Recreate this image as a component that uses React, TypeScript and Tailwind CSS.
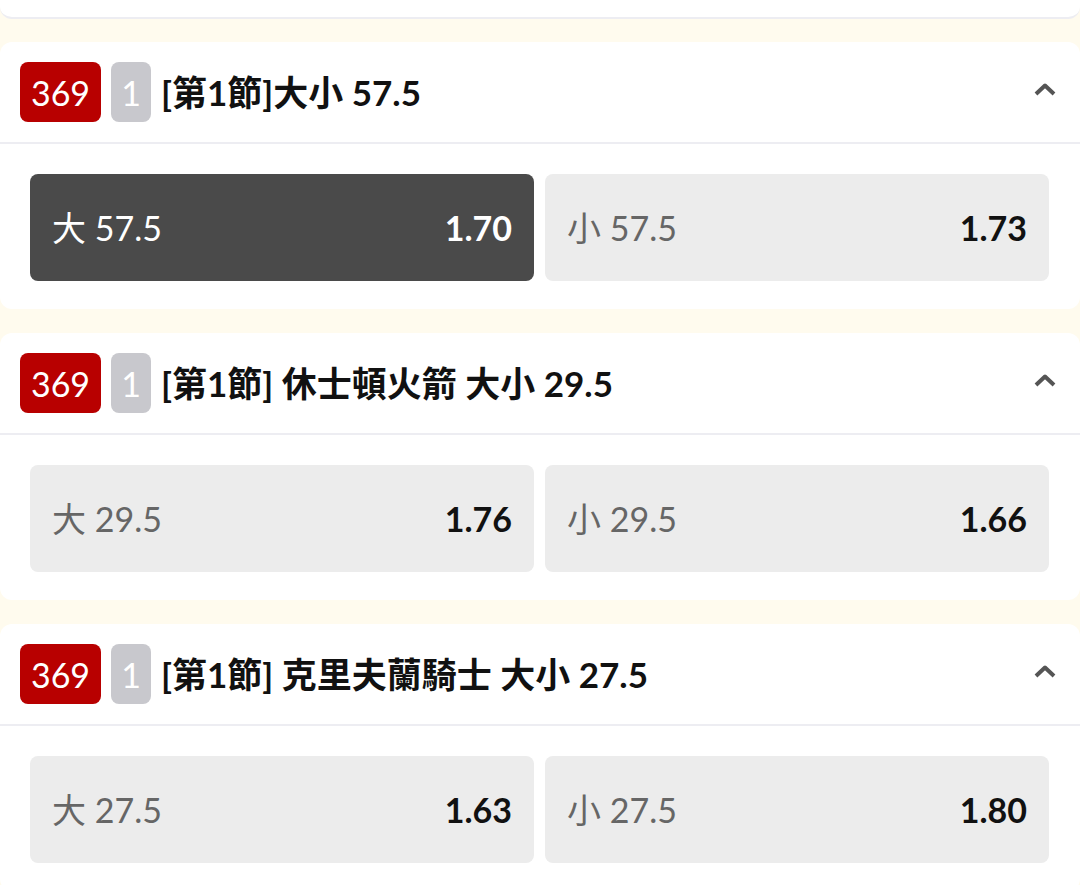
import React from 'react';

type Market = {
  title: string;
  over: { label: string; odds: string };
  under: { label: string; odds: string };
  selected?: 'over' | 'under';
};

const markets: Market[] = [
  {
    title: '[第1節]大小 57.5',
    over: { label: '大 57.5', odds: '1.70' },
    under: { label: '小 57.5', odds: '1.73' },
    selected: 'over',
  },
  {
    title: '[第1節] 休士頓火箭 大小 29.5',
    over: { label: '大 29.5', odds: '1.76' },
    under: { label: '小 29.5', odds: '1.66' },
  },
  {
    title: '[第1節] 克里夫蘭騎士 大小 27.5',
    over: { label: '大 27.5', odds: '1.63' },
    under: { label: '小 27.5', odds: '1.80' },
  },
];

function ChevronUp() {
  return (
    <svg width="24" height="16" viewBox="0 0 24 16" fill="none">
      <path d="M3 13 L12 4.5 L21 13" stroke="#555" strokeWidth="4" strokeLinejoin="round" />
    </svg>
  );
}

function OddsButton({ label, odds, active }: { label: string; odds: string; active?: boolean }) {
  return (
    <button
      className={
        active
          ? 'flex-1 h-[107px] rounded-lg bg-[#4a4a4a] px-[22px] flex items-center justify-between text-[34px]'
          : 'flex-1 h-[107px] rounded-lg bg-[#ececec] px-[22px] flex items-center justify-between text-[34px]'
      }
    >
      <span className={active ? 'text-white' : 'text-[#666666]'}>{label}</span>
      <span className={active ? 'font-bold text-white' : 'font-bold text-[#111111]'}>{odds}</span>
    </button>
  );
}

function MarketCard({ m }: { m: Market }) {
  return (
    <section className="bg-white rounded-xl">
      {/* header */}
      <div className="h-[102px] px-5 flex items-center border-b-2 border-[#ededf2]">
        <span className="w-[81px] h-[60px] rounded-lg bg-[#b80000] text-white text-[34px] flex items-center justify-center">
          369
        </span>
        <span className="ml-[10px] w-[40px] h-[60px] rounded-lg bg-[#c8c8cd] text-white text-[34px] flex items-center justify-center">
          1
        </span>
        <h2 className="ml-[10px] text-[35px] font-bold text-[#111111] leading-none">{m.title}</h2>
        <span className="ml-auto mr-[3px] mt-[-6px]">
          <ChevronUp />
        </span>
      </div>
      {/* selections */}
      <div className="pl-[30px] pr-[31px] pt-[30px] pb-[28px] flex gap-[11px]">
        <OddsButton label={m.over.label} odds={m.over.odds} active={m.selected === 'over'} />
        <OddsButton label={m.under.label} odds={m.under.odds} active={m.selected === 'under'} />
      </div>
    </section>
  );
}

export default function App() {
  return (
    <div
      className="w-[1080px] h-[885px] overflow-hidden bg-[#fffbee]"
      style={{ fontFamily: 'Lato, "Noto Sans CJK TC", sans-serif' }}
    >
      <div className="h-[19px] bg-white rounded-b-xl border-b-2 border-[#ededf2]" />
      <div className="pt-[23px] flex flex-col gap-[24px]">
        {markets.map((m, i) => (
          <MarketCard key={i} m={m} />
        ))}
      </div>
    </div>
  );
}
